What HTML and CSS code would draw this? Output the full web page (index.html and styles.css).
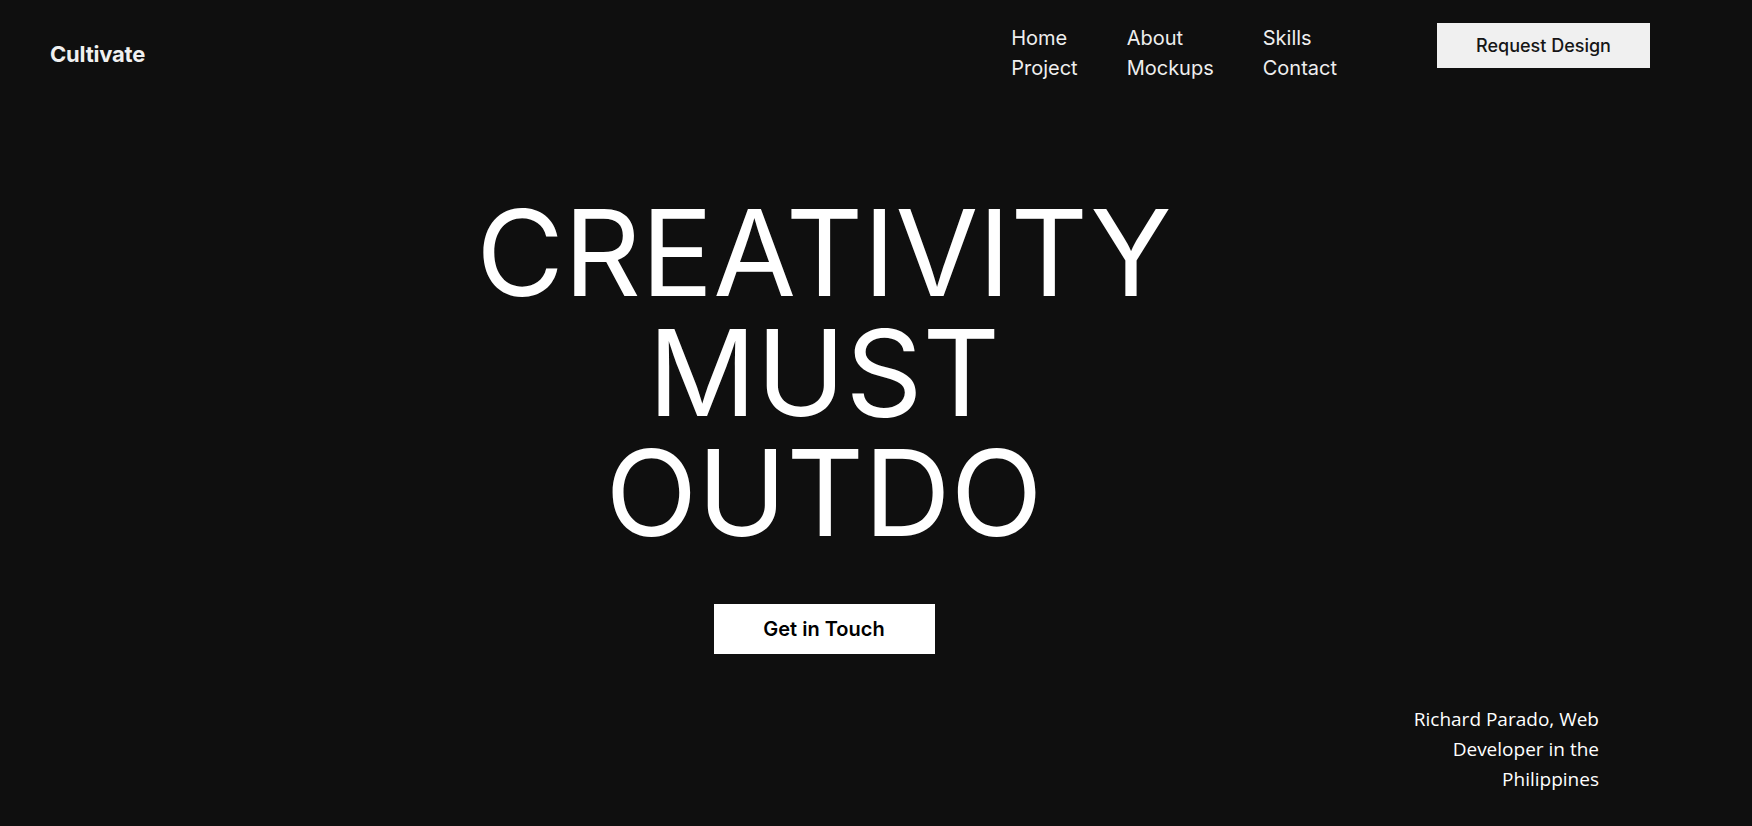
FILE: index.html
```html
<!DOCTYPE html>
<html lang="en">
<head>
<meta charset="utf-8">
<title>Cultivate</title>
<link rel="stylesheet" href="styles.css">
</head>
<body>
<header class="site-header">
  <a class="logo" href="#">Cultivate</a>
  <div class="header-right">
    <nav class="nav">
      <a href="#">Home</a>
      <a href="#">About</a>
      <a href="#">Skills</a>
      <a href="#">Project</a>
      <a href="#">Mockups</a>
      <a href="#">Contact</a>
    </nav>
    <a class="btn-request" href="#">Request Design</a>
  </div>
</header>
<main class="hero">
  <h1 class="hero-title">CREATIVITY<br>MUST<br>OUTDO</h1>
  <a class="btn-touch" href="#">Get in Touch</a>
</main>
<p class="credit">Richard Parado, Web Developer in the Philippines</p>
</body>
</html>
```

FILE: styles.css
```css
* { box-sizing: border-box; }
html, body { margin: 0; padding: 0; }
body {
  background: #0f0f0f;
  color: #eeeeee;
  font-family: Inter, "Liberation Sans", sans-serif;
  width: 1752px;
  height: 826px;
  overflow: hidden;
  display: flex;
  flex-direction: column;
}
a { text-decoration: none; color: inherit; }

.site-header {
  display: flex;
  justify-content: space-between;
  align-items: flex-start;
  padding: 23px 102px 0 50px;
}
.logo {
  font-size: 22px;
  font-weight: 700;
  color: #f0f0f0;
  line-height: 27px;
  margin-top: 18px;
  letter-spacing: -0.2px;
}
.header-right {
  display: flex;
  align-items: flex-start;
  gap: 100px;
}
.nav {
  display: grid;
  grid-template-columns: repeat(3, auto);
  column-gap: 49px;
  font-size: 20px;
  line-height: 30px;
  color: #eeeeee;
}
.btn-request {
  display: block;
  width: 213px;
  height: 45px;
  background: #f0f0f0;
  color: #161616;
  font-size: 18px;
  font-weight: 500;
  line-height: 45px;
  text-align: center;
}

.hero {
  display: flex;
  flex-direction: column;
  align-items: center;
  padding-right: 104px;
  margin-top: 110px;
}
.hero-title {
  margin: 0;
  font-size: 120px;
  font-weight: 400;
  line-height: 120px;
  color: #ffffff;
  text-align: center;
}
.btn-touch {
  margin-top: 51px;
  display: block;
  width: 221px;
  height: 50px;
  background: #ffffff;
  color: #000000;
  font-size: 20px;
  font-weight: 600;
  line-height: 50px;
  text-align: center;
}

.credit {
  align-self: flex-end;
  margin: 50px 153px 0 0;
  width: 200px;
  text-align: right;
  font-family: "Open Sans", "Noto Sans", sans-serif;
  font-size: 19px;
  line-height: 30px;
  color: #ffffff;
}
```
